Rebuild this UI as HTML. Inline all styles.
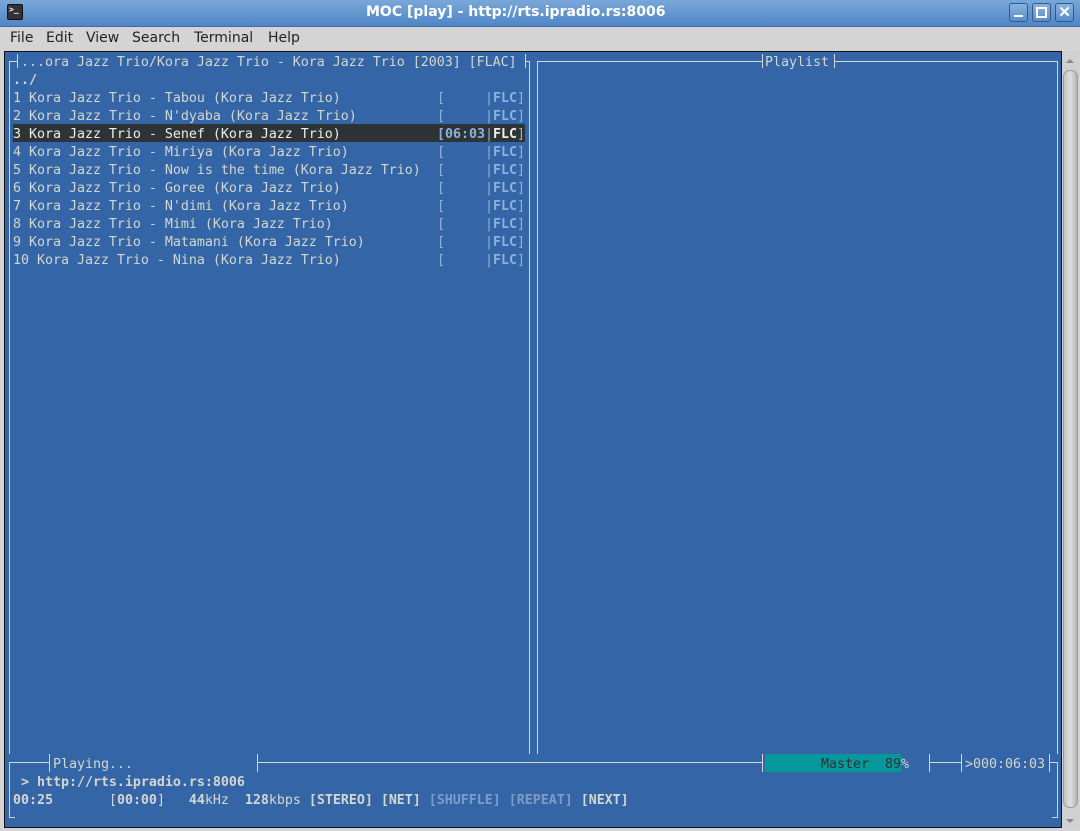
<!DOCTYPE html>
<html><head><meta charset="utf-8"><style>
*{margin:0;padding:0;box-sizing:border-box}
html,body{width:1080px;height:831px;overflow:hidden}
body{background:#d4d4d4;font-family:"DejaVu Sans","Liberation Sans",sans-serif;position:relative}
.tb{position:absolute;left:0;top:0;width:1080px;height:27px;background:linear-gradient(#7aa7d8,#4f86c6);border-bottom:1px solid #3e6da5}
.tb .t{position:absolute;left:366px;top:4px;color:#fff;font-weight:bold;font-size:14px;white-space:nowrap}
.ic{position:absolute;left:7px;top:4px;width:16px;height:16px;background:#333;border:1px solid #111;border-radius:2px;color:#fff;font:bold 8px "DejaVu Sans Mono",monospace;padding-left:1px;line-height:9px}
.wb{position:absolute;top:3px;width:19px;height:19px;border:1px solid #2f5a8e;border-radius:3px;background:linear-gradient(#8ab3e0,#5a8ccb)}
.menu{position:absolute;top:30px;left:10px;font-size:14px;color:#222}
.menu span{position:absolute;top:0}
.term{position:absolute;left:4px;top:51px;width:1058px;height:777px;background:#3465a6;border:1px solid #111}
.sb{position:absolute;left:1062px;top:51px;width:17px;height:777px;background:#d0d0d0}
.th{position:absolute;left:1063px;top:70px;width:15px;height:738px;border:1px solid #9a9a9a;border-radius:7px;background:linear-gradient(90deg,#c4c4c4,#dedede,#b4b4b4)}
.t1,.t2{position:absolute;left:1066px;width:0;height:0;border-left:4px solid transparent;border-right:4px solid transparent}
.t1{top:59px;border-bottom:4px solid #888}.t2{top:819px;border-top:4px solid #888}
.x{position:absolute;font:13.33px/18px "DejaVu Sans Mono","Liberation Mono",monospace;color:#d3d7cf;white-space:pre;margin-top:2px;letter-spacing:-0.03px}
.h{position:absolute;background:#d3d7cf}
.b{font-weight:bold}.c{color:#8fb0dc}.d{color:#7f9cc8}
</style></head><body>
<div class="tb"><div class="ic">&gt;_</div><div class="t">MOC [play] - http://rts.ipradio.rs:8006</div>
<div class="wb" style="left:1009px"><div style="position:absolute;left:4px;top:11px;width:9px;height:2px;background:#fff"></div></div>
<div class="wb" style="left:1032px"><div style="position:absolute;left:3px;top:3px;width:11px;height:11px;border:2px solid #fff"></div></div>
<div class="wb" style="left:1055px;color:#fff;font:bold 15px/17px sans-serif;text-align:center">✕</div>
</div>
<div class="menu"><span style="left:0">File</span><span style="left:36px">Edit</span><span style="left:76px">View</span><span style="left:122px">Search</span><span style="left:184px">Terminal</span><span style="left:258px">Help</span></div>
<div class="term"></div>
<div class="sb"></div><div class="t1"></div><div class="th"></div><div class="t2"></div>

<div class="h" style="left:9px;top:61px;width:8px;height:1px"></div>
<div class="h" style="left:525px;top:61px;width:5px;height:1px"></div>
<div class="h" style="left:537px;top:61px;width:225px;height:1px"></div>
<div class="h" style="left:834px;top:61px;width:223px;height:1px"></div>
<div class="h" style="left:9px;top:61px;width:1px;height:693px"></div>
<div class="h" style="left:529px;top:61px;width:1px;height:693px"></div>
<div class="h" style="left:537px;top:61px;width:1px;height:693px"></div>
<div class="h" style="left:1057px;top:61px;width:1px;height:693px"></div>
<div class="h" style="left:17px;top:54px;width:1px;height:14px"></div>
<div class="h" style="left:525px;top:54px;width:1px;height:14px"></div>
<div class="h" style="left:762px;top:54px;width:1px;height:14px"></div>
<div class="h" style="left:834px;top:54px;width:1px;height:14px"></div>
<div class="h" style="left:9px;top:762px;width:1px;height:56px"></div>
<div class="h" style="left:1057px;top:762px;width:1px;height:56px"></div>
<div class="h" style="left:9px;top:817px;width:6px;height:1px"></div>
<div class="h" style="left:1052px;top:817px;width:6px;height:1px"></div>
<div class="h" style="left:9px;top:762px;width:40px;height:1px"></div>
<div class="h" style="left:49px;top:754px;width:1px;height:18px"></div>
<div class="h" style="left:257px;top:754px;width:1px;height:18px"></div>
<div class="h" style="left:257px;top:762px;width:505px;height:1px"></div>
<div class="h" style="left:762px;top:754px;width:1px;height:18px"></div>
<div class="h" style="left:929px;top:754px;width:1px;height:18px"></div>
<div class="h" style="left:929px;top:762px;width:32px;height:1px"></div>
<div class="h" style="left:961px;top:754px;width:1px;height:18px"></div>
<div class="h" style="left:1049px;top:762px;width:8px;height:1px"></div>
<div class="h" style="left:1049px;top:754px;width:1px;height:18px"></div>
<div style="position:absolute;left:765px;top:754px;width:136px;height:18px;background:#06989a"></div>
<div style="position:absolute;left:13px;top:124px;width:512px;height:18px;background:#2e3436"></div>

<div class="x" style="left:21px;top:52px">...ora Jazz Trio/Kora Jazz Trio - Kora Jazz Trio [2003] [FLAC]</div>
<div class="x" style="left:765px;top:52px">Playlist</div>
<div class="x b" style="left:13px;top:70px">../</div>
<div class="x" style="left:13px;top:88px">1 Kora Jazz Trio - Tabou (Kora Jazz Trio)</div>
<div class="x" style="left:13px;top:106px">2 Kora Jazz Trio - N'dyaba (Kora Jazz Trio)</div>
<div class="x" style="left:13px;top:124px;color:#eeeeec">3 Kora Jazz Trio - Senef (Kora Jazz Trio)</div>
<div class="x" style="left:13px;top:142px">4 Kora Jazz Trio - Miriya (Kora Jazz Trio)</div>
<div class="x" style="left:13px;top:160px">5 Kora Jazz Trio - Now is the time (Kora Jazz Trio)</div>
<div class="x" style="left:13px;top:178px">6 Kora Jazz Trio - Goree (Kora Jazz Trio)</div>
<div class="x" style="left:13px;top:196px">7 Kora Jazz Trio - N'dimi (Kora Jazz Trio)</div>
<div class="x" style="left:13px;top:214px">8 Kora Jazz Trio - Mimi (Kora Jazz Trio)</div>
<div class="x" style="left:13px;top:232px">9 Kora Jazz Trio - Matamani (Kora Jazz Trio)</div>
<div class="x" style="left:13px;top:250px">10 Kora Jazz Trio - Nina (Kora Jazz Trio)</div>
<div class="x c" style="left:437px;top:88px">[     |<b>FLC</b>]</div>
<div class="x c" style="left:437px;top:106px">[     |<b>FLC</b>]</div>
<div class="x c" style="left:437px;top:124px"><b>[06:03</b>|<b style="color:#eeeeec">FLC</b>]</div>
<div class="x c" style="left:437px;top:142px">[     |<b>FLC</b>]</div>
<div class="x c" style="left:437px;top:160px">[     |<b>FLC</b>]</div>
<div class="x c" style="left:437px;top:178px">[     |<b>FLC</b>]</div>
<div class="x c" style="left:437px;top:196px">[     |<b>FLC</b>]</div>
<div class="x c" style="left:437px;top:214px">[     |<b>FLC</b>]</div>
<div class="x c" style="left:437px;top:232px">[     |<b>FLC</b>]</div>
<div class="x c" style="left:437px;top:250px">[     |<b>FLC</b>]</div>

<div class="x" style="left:53px;top:754px">Playing...</div>
<div class="x" style="left:821px;top:754px;color:#2e3436">Master  89<span style="color:#d3d7cf">%</span></div>
<div class="x" style="left:965px;top:754px">&gt;000:06:03</div>
<div class="x b" style="left:13px;top:772px"> &gt; http://rts.ipradio.rs:8006</div>
<div class="x" style="left:13px;top:790px"><b>00:25</b>       [<b>00:00</b>]   <b>44</b>kHz  <b>128</b>kbps <b>[STEREO] [NET]</b> <b class="d">[SHUFFLE] [REPEAT]</b> <b>[NEXT]</b></div>
</body></html>
